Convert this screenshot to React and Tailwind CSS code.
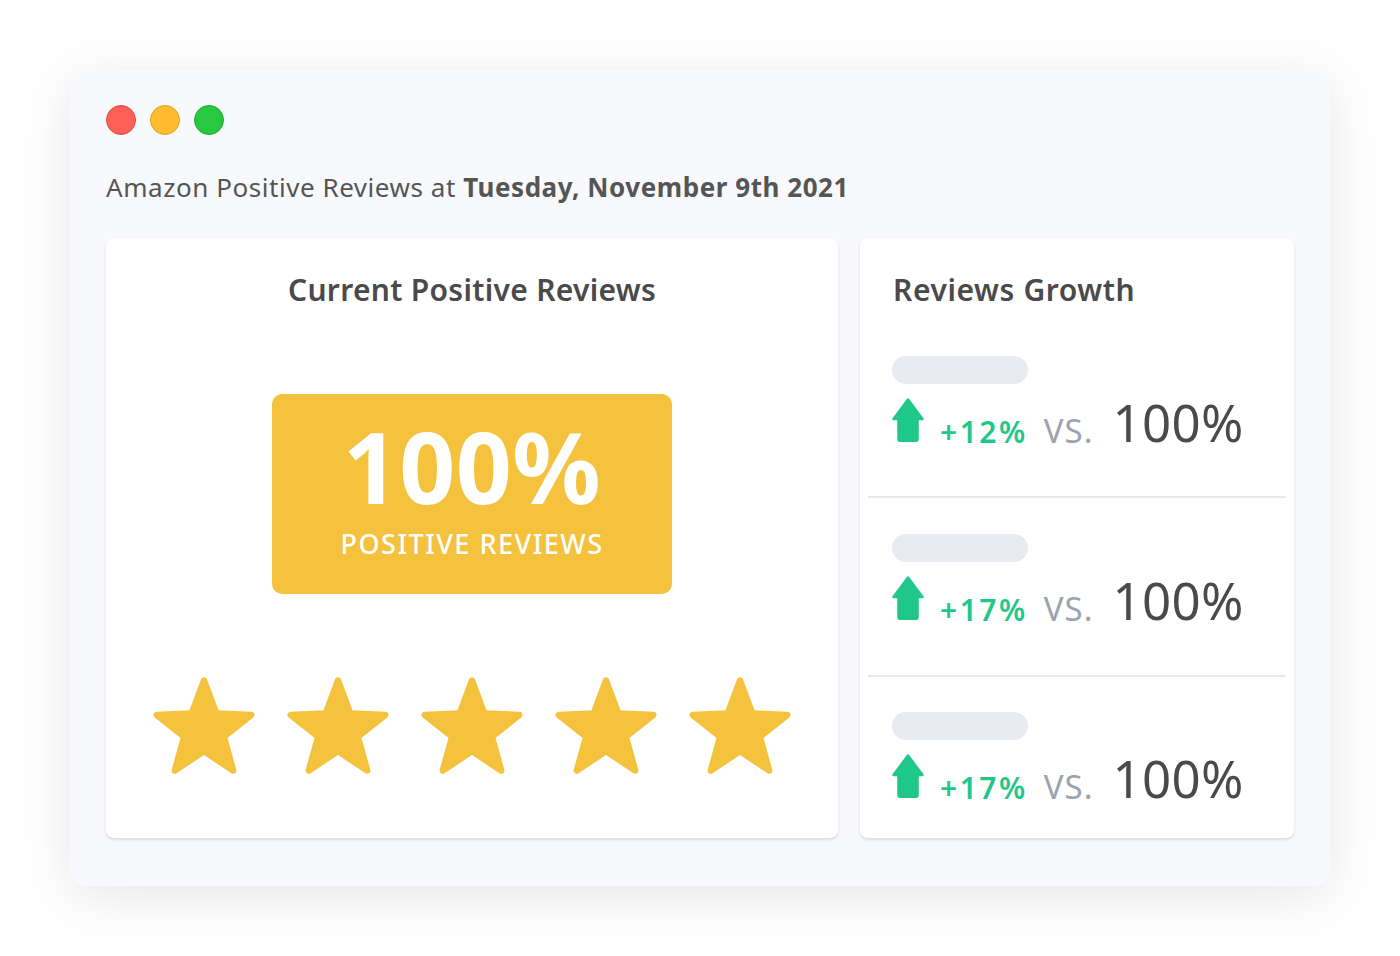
const rows = [
  { change: '+12%', base: '100%' },
  { change: '+17%', base: '100%' },
  { change: '+17%', base: '100%' },
]

function Star() {
  return (
    <svg width="108" height="104" viewBox="0 0 100 96" className="block">
      <polygon
        points="50,6 61.35,36.39 93.75,37.79 68.36,57.96 77.04,89.21 50,71.3 22.96,89.21 31.64,57.96 6.25,37.79 38.65,36.39"
        fill="#f5c23d"
        stroke="#f5c23d"
        strokeWidth="6"
        strokeLinejoin="round"
      />
    </svg>
  )
}

function UpArrow() {
  return (
    <svg width="32" height="44" viewBox="0 0 32 44" className="block shrink-0 mb-[6px]">
      <path
        d="M16 1.5 L30.5 21 L25.5 21 L25.5 41 Q25.5 43 23.5 43 L8.5 43 Q6.5 43 6.5 41 L6.5 21 L1.5 21 Z"
        fill="#1fc88a"
        stroke="#1fc88a"
        strokeWidth="2.5"
        strokeLinejoin="round"
      />
    </svg>
  )
}

export default function App() {
  return (
    <div className="w-[1400px] h-[956px] bg-white pt-[70px] pl-[70px]" style={{ fontFamily: '"Noto Sans", "Liberation Sans", sans-serif' }}>
      <div className="w-[1260px] h-[816px] rounded-2xl bg-[#f8f9fc] shadow-[0_10px_55px_rgba(0,0,0,0.1)] px-[36px] pt-[35px]">
        <div className="flex gap-[14px]">
          <span className="w-[30px] h-[30px] rounded-full bg-[#ff5f57] border border-[#e0443e]" />
          <span className="w-[30px] h-[30px] rounded-full bg-[#febc2e] border border-[#dea123]" />
          <span className="w-[30px] h-[30px] rounded-full bg-[#28c840] border border-[#1aab29]" />
        </div>
        <p className="mt-[32px] text-[26px] leading-[40px] text-[#555] tracking-[0.55px]">
          Amazon Positive Reviews at <span className="font-bold">Tuesday, November 9th 2021</span>
        </p>
        <div className="mt-[31px] flex gap-[22px]">
          <div className="w-[732px] h-[600px] bg-white rounded-lg shadow-[0_2px_3px_rgba(0,0,0,0.12)] flex flex-col items-center pt-[30px]">
            <h2 className="text-[30px] leading-[44px] font-semibold text-[#4a4a4a] tracking-[0.3px]">Current Positive Reviews</h2>
            <div className="mt-[82px] w-[400px] h-[200px] rounded-[10px] bg-[#f5c23d] flex flex-col items-center text-white">
              <span className="mt-[22px] text-[98px] leading-[100px] font-bold tracking-[0.5px]">100%</span>
              <span className="mt-[10px] text-[27px] leading-[36px] font-medium tracking-[1.5px]">POSITIVE REVIEWS</span>
            </div>
            <div className="mt-[80px] flex gap-[26px]">
              <Star />
              <Star />
              <Star />
              <Star />
              <Star />
            </div>
          </div>
          <div className="w-[434px] h-[600px] bg-white rounded-lg shadow-[0_2px_3px_rgba(0,0,0,0.12)] px-[8px] pt-[30px]">
            <h2 className="pl-[25px] text-[30px] leading-[44px] font-semibold text-[#4a4a4a] tracking-[0.6px]">Reviews Growth</h2>
            <div className="mt-[44px]">
              {rows.map((r, i) => (
                <div
                  key={i}
                  className={`px-[24px] ${i === 0 ? 'h-[142px] border-b-2 border-[#e6e8ee]' : ''} ${i === 1 ? 'h-[179px] pt-[36px] border-b-2 border-[#e6e8ee]' : ''} ${i === 2 ? 'pt-[35px]' : ''}`}
                >
                  <div className="w-[136px] h-[28px] rounded-full bg-[#e8ebf2]" />
                  <div className="mt-[14px] flex items-end h-[50px]">
                    <UpArrow />
                    <span className="ml-[16px] text-[30px] leading-[32px] font-semibold text-[#1fc88a] tracking-[2.5px]">{r.change}</span>
                    <span className="ml-[16px] text-[33px] leading-[34px] text-[#9ca3af] tracking-[1px]">VS.</span>
                    <span className="ml-[19px] text-[51px] leading-[52px] text-[#4a4a4a] tracking-[0.3px]">{r.base}</span>
                  </div>
                </div>
              ))}
            </div>
          </div>
        </div>
      </div>
    </div>
  )
}
